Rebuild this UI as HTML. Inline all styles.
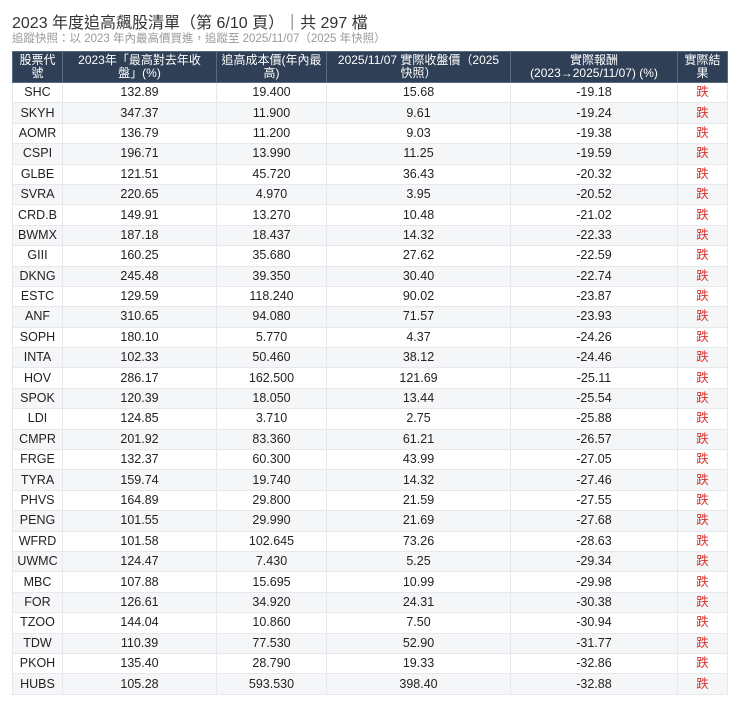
<!DOCTYPE html>
<html><head><meta charset="utf-8">
<style>
body{margin:0;background:#fff;font-family:"Liberation Sans","Noto Sans CJK TC",sans-serif;color:#222;}
.t{position:absolute;left:12px;top:9px;font-size:16px;color:#333;white-space:nowrap}
.s{position:absolute;left:12px;top:30px;font-size:11.5px;color:#999;white-space:nowrap}
table{position:absolute;left:12px;top:51px;width:715px;border-collapse:collapse;font-size:12.5px;table-layout:fixed}
th{background:#2e3f56;color:#fff;font-weight:normal;height:30px;line-height:13px;padding:0;border:1px solid #5a6a80;font-size:12px;overflow:hidden}
td{height:19.4px;padding:0;text-align:center;border:1px solid #e6e8ec;line-height:19px}
tr:nth-child(even) td{background:#f4f6f8}
td.r{color:#d9332e}
</style></head><body>
<div class="t">2023 年度追高飆股清單（第 6/10 頁）｜共 297 檔</div>
<div class="s">追蹤快照：以 2023 年內最高價買進，追蹤至 2025/11/07（2025 年快照）</div>
<table>
<colgroup><col style="width:50px"><col style="width:154px"><col style="width:110px"><col style="width:184px"><col style="width:167px"><col style="width:50px"></colgroup>
<thead><tr><th>股票代<br>號</th><th>2023年「最高對去年收<br>盤」(%)</th><th><span style="white-space:nowrap">追高成本價(年內最</span><br>高)</th><th>2025/11/07 實際收盤價（2025<br>快照）</th><th>實際報酬<br>(2023→2025/11/07) (%)</th><th>實際結<br>果</th></tr></thead>
<tbody>
<tr><td>SHC</td><td>132.89</td><td>19.400</td><td>15.68</td><td>-19.18</td><td class="r">跌</td></tr>
<tr><td>SKYH</td><td>347.37</td><td>11.900</td><td>9.61</td><td>-19.24</td><td class="r">跌</td></tr>
<tr><td>AOMR</td><td>136.79</td><td>11.200</td><td>9.03</td><td>-19.38</td><td class="r">跌</td></tr>
<tr><td>CSPI</td><td>196.71</td><td>13.990</td><td>11.25</td><td>-19.59</td><td class="r">跌</td></tr>
<tr><td>GLBE</td><td>121.51</td><td>45.720</td><td>36.43</td><td>-20.32</td><td class="r">跌</td></tr>
<tr><td>SVRA</td><td>220.65</td><td>4.970</td><td>3.95</td><td>-20.52</td><td class="r">跌</td></tr>
<tr><td>CRD.B</td><td>149.91</td><td>13.270</td><td>10.48</td><td>-21.02</td><td class="r">跌</td></tr>
<tr><td>BWMX</td><td>187.18</td><td>18.437</td><td>14.32</td><td>-22.33</td><td class="r">跌</td></tr>
<tr><td>GIII</td><td>160.25</td><td>35.680</td><td>27.62</td><td>-22.59</td><td class="r">跌</td></tr>
<tr><td>DKNG</td><td>245.48</td><td>39.350</td><td>30.40</td><td>-22.74</td><td class="r">跌</td></tr>
<tr><td>ESTC</td><td>129.59</td><td>118.240</td><td>90.02</td><td>-23.87</td><td class="r">跌</td></tr>
<tr><td>ANF</td><td>310.65</td><td>94.080</td><td>71.57</td><td>-23.93</td><td class="r">跌</td></tr>
<tr><td>SOPH</td><td>180.10</td><td>5.770</td><td>4.37</td><td>-24.26</td><td class="r">跌</td></tr>
<tr><td>INTA</td><td>102.33</td><td>50.460</td><td>38.12</td><td>-24.46</td><td class="r">跌</td></tr>
<tr><td>HOV</td><td>286.17</td><td>162.500</td><td>121.69</td><td>-25.11</td><td class="r">跌</td></tr>
<tr><td>SPOK</td><td>120.39</td><td>18.050</td><td>13.44</td><td>-25.54</td><td class="r">跌</td></tr>
<tr><td>LDI</td><td>124.85</td><td>3.710</td><td>2.75</td><td>-25.88</td><td class="r">跌</td></tr>
<tr><td>CMPR</td><td>201.92</td><td>83.360</td><td>61.21</td><td>-26.57</td><td class="r">跌</td></tr>
<tr><td>FRGE</td><td>132.37</td><td>60.300</td><td>43.99</td><td>-27.05</td><td class="r">跌</td></tr>
<tr><td>TYRA</td><td>159.74</td><td>19.740</td><td>14.32</td><td>-27.46</td><td class="r">跌</td></tr>
<tr><td>PHVS</td><td>164.89</td><td>29.800</td><td>21.59</td><td>-27.55</td><td class="r">跌</td></tr>
<tr><td>PENG</td><td>101.55</td><td>29.990</td><td>21.69</td><td>-27.68</td><td class="r">跌</td></tr>
<tr><td>WFRD</td><td>101.58</td><td>102.645</td><td>73.26</td><td>-28.63</td><td class="r">跌</td></tr>
<tr><td>UWMC</td><td>124.47</td><td>7.430</td><td>5.25</td><td>-29.34</td><td class="r">跌</td></tr>
<tr><td>MBC</td><td>107.88</td><td>15.695</td><td>10.99</td><td>-29.98</td><td class="r">跌</td></tr>
<tr><td>FOR</td><td>126.61</td><td>34.920</td><td>24.31</td><td>-30.38</td><td class="r">跌</td></tr>
<tr><td>TZOO</td><td>144.04</td><td>10.860</td><td>7.50</td><td>-30.94</td><td class="r">跌</td></tr>
<tr><td>TDW</td><td>110.39</td><td>77.530</td><td>52.90</td><td>-31.77</td><td class="r">跌</td></tr>
<tr><td>PKOH</td><td>135.40</td><td>28.790</td><td>19.33</td><td>-32.86</td><td class="r">跌</td></tr>
<tr><td>HUBS</td><td>105.28</td><td>593.530</td><td>398.40</td><td>-32.88</td><td class="r">跌</td></tr>
</tbody></table>
</body></html>
